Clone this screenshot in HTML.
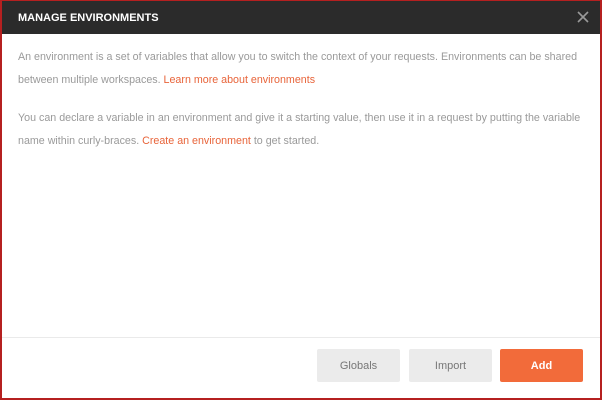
<!DOCTYPE html>
<html><head><style>
*{margin:0;padding:0;box-sizing:border-box}
body{width:602px;height:400px;overflow:hidden;background:#fff;font-family:"Liberation Sans",sans-serif;}
.frame{position:absolute;left:0;top:0;width:602px;height:400px;border:1px solid #b52020;border-left-width:2px;border-top-width:1px;border-right-width:2px;border-bottom-width:2px;}
.hdr{position:absolute;left:2px;top:1px;width:598px;height:33px;background:#2b2b2b;color:#fff;font-size:11px;font-weight:bold;line-height:35px;padding-left:16px;}
.x{position:absolute;right:10px;top:9px;width:14px;height:14px}
.p{position:absolute;left:18px;font-size:10.7px;color:#9a9a9a;line-height:23px;width:584px;white-space:nowrap}
.p a{color:#e8643a;text-decoration:none}
.line{position:absolute;left:2px;right:2px;top:337px;height:1px;background:#eaeaea}
.b{position:absolute;top:349px;width:83px;height:33px;background:#ebebeb;color:#777;font-size:11px;text-align:center;line-height:35px;border-radius:2px}
</style></head><body>
<div class="frame"></div>
<div class="hdr">MANAGE ENVIRONMENTS
<svg class="x" viewBox="0 0 14 14"><path d="M2 2L12 12M12 2L2 12" stroke="#999" stroke-width="1.6"/></svg></div>
<div class="p" style="top:46px">An environment is a set of variables that allow you to switch the context of your requests. Environments can be shared<br>between multiple workspaces. <a>Learn more about environments</a></div>
<div class="p" style="top:107px">You can declare a variable in an environment and give it a starting value, then use it in a request by putting the variable<br>name within curly-braces. <a>Create an environment</a> to get started.</div>
<div class="line"></div>
<div class="b" style="left:317px">Globals</div>
<div class="b" style="left:409px">Import</div>
<div class="b" style="left:500px;background:#f26b3a;color:#fff;font-weight:bold">Add</div>
</body></html>
